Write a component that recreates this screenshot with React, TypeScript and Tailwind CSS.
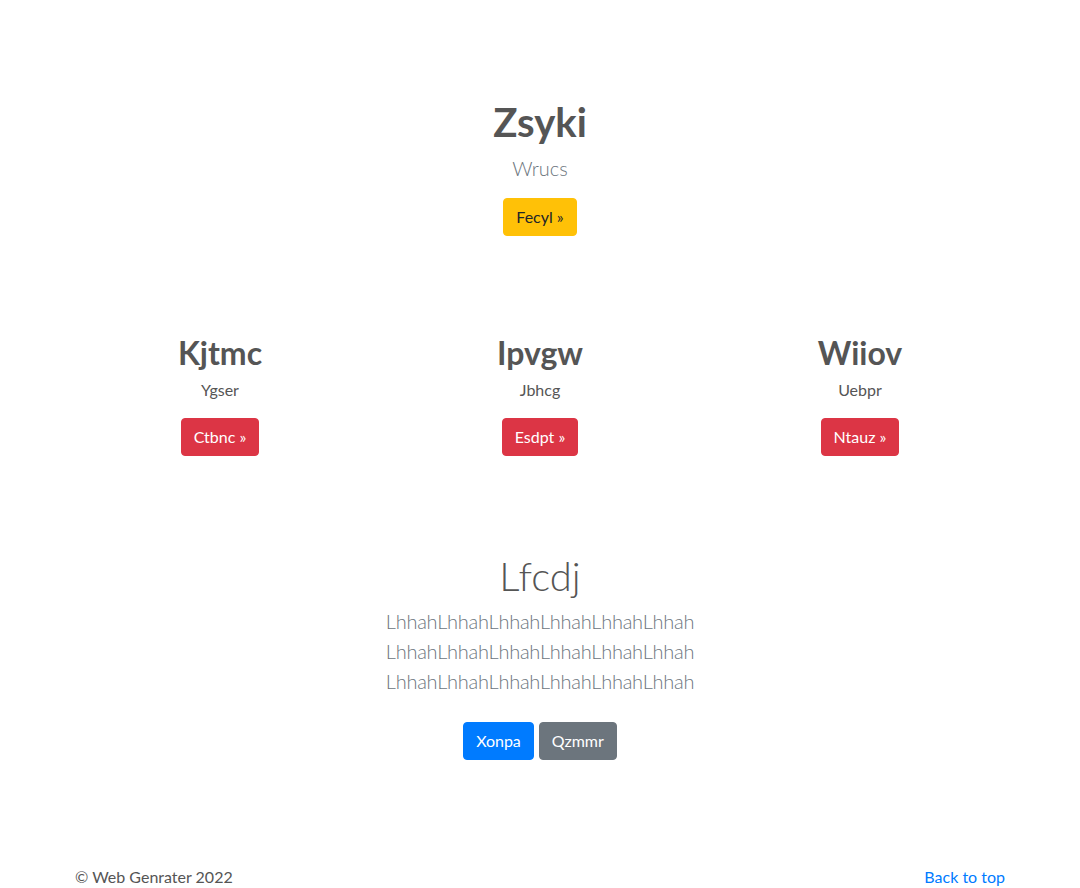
export default function App() {
  const cols = [
    { title: 'Kjtmc', text: 'Ygser', btn: 'Ctbnc' },
    { title: 'Ipvgw', text: 'Jbhcg', btn: 'Esdpt' },
    { title: 'Wiiov', text: 'Uebpr', btn: 'Ntauz' },
  ];
  const line = 'LhhahLhhahLhhahLhhahLhhahLhhah';

  return (
    <div className="min-h-screen bg-white text-[#555] font-['Lato','Noto_Sans',sans-serif]">
      <main>
        {/* hero */}
        <section className="pt-[98px] text-center">
          <h1 className="text-[40px] leading-[48px] font-bold text-[#555]">Zsyki</h1>
          <p className="mt-[7px] text-[20px] leading-[30px] font-light text-[#6c757d]">Wrucs</p>
          <a href="#" className="mt-[15px] inline-block rounded-[4px] border border-[#ffc107] bg-[#ffc107] px-3 py-[6px] text-[16px] leading-[24px] text-[#212529]">
            Fecyl &raquo;
          </a>
        </section>

        {/* three columns */}
        <section className="mx-auto mt-[98px] w-[960px] px-[15px]">
          <div className="-mx-[15px] grid grid-cols-3">
            {cols.map((c) => (
              <div key={c.title} className="px-[15px] text-center">
                <h2 className="text-[32px] leading-[38px] font-bold text-[#555]">{c.title}</h2>
                <p className="mt-[6px] text-[16px] leading-[24px] text-[#555]">{c.text}</p>
                <a href="#" className="mt-[16px] inline-block rounded-[4px] border border-[#dc3545] bg-[#dc3545] px-3 py-[6px] text-[16px] leading-[24px] text-white">
                  {c.btn} &raquo;
                </a>
              </div>
            ))}
          </div>
        </section>

        {/* jumbotron-ish */}
        <section className="mt-[96px] text-center">
          <h1 className="text-[40px] leading-[48px] font-light text-[#555]">Lfcdj</h1>
          <div className="mt-[6px] text-[20px] leading-[30px] font-light tracking-[-0.25px] text-[#6c757d]">
            <p className="whitespace-nowrap">{line}</p>
            <p className="whitespace-nowrap">{line}</p>
            <p className="whitespace-nowrap">{line}</p>
          </div>
          <div className="mt-[26px] flex justify-center gap-[5px]">
            <a href="#" className="rounded-[4px] border border-[#007bff] bg-[#007bff] px-3 py-[6px] text-[16px] leading-[24px] text-white">Xonpa</a>
            <a href="#" className="rounded-[4px] border border-[#6c757d] bg-[#6c757d] px-3 py-[6px] text-[16px] leading-[24px] text-white">Qzmmr</a>
          </div>
        </section>
      </main>

      <footer className="mx-auto mt-[105px] flex w-[960px] justify-between px-[15px] text-[16px] leading-[24px]">
        <p className="text-[#555]">&copy; Web Genrater 2022</p>
        <a href="#" className="text-[#007bff]">Back to top</a>
      </footer>
    </div>
  );
}
